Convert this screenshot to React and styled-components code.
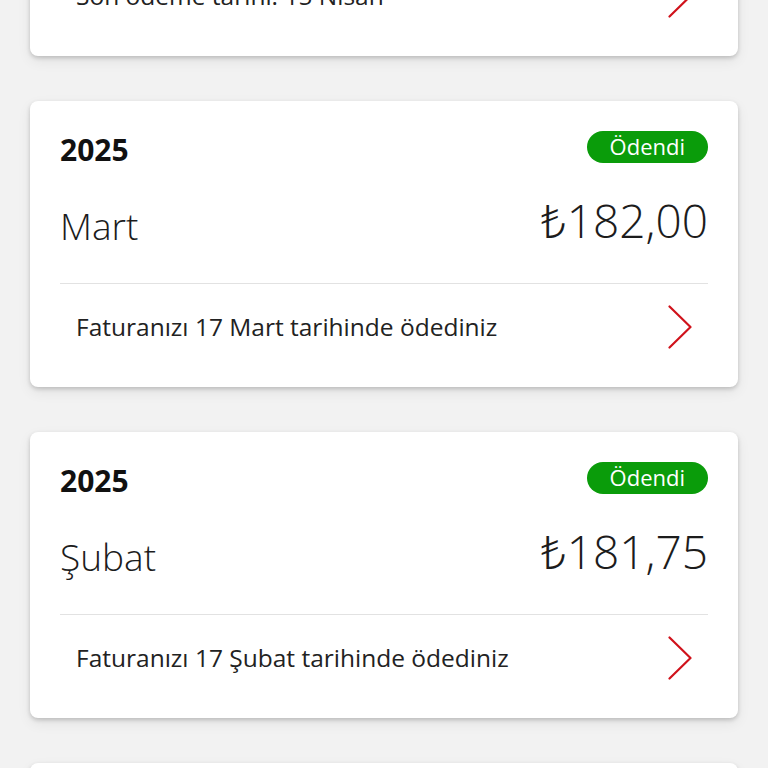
import React from 'react';
import styled, { createGlobalStyle } from 'styled-components';

const GlobalStyle = createGlobalStyle`
  html, body {
    margin: 0;
    padding: 0;
    background: #f2f2f2;
    font-family: "Open Sans", "Noto Sans", "DejaVu Sans", sans-serif;
    overflow: hidden;
  }
`;

const bills = [
  { year: 2025, month: 'Nisan', amount: '₺183,50', paid: false, note: 'Son ödeme tarihi: 15 Nisan' },
  { year: 2025, month: 'Mart', amount: '₺182,00', paid: true, note: 'Faturanızı 17 Mart tarihinde ödediniz' },
  { year: 2025, month: 'Şubat', amount: '₺181,75', paid: true, note: 'Faturanızı 17 Şubat tarihinde ödediniz' },
  { year: 2025, month: 'Ocak', amount: '₺179,90', paid: true, note: 'Faturanızı 17 Ocak tarihinde ödediniz' },
];

const Chevron = () => (
  <svg width="24" height="44" viewBox="0 0 24 44" fill="none">
    <polyline points="1.5,1.5 22.5,22 1.5,42.5" stroke="#d0121b" strokeWidth="2.2" strokeLinecap="round" strokeLinejoin="round" />
  </svg>
);

const BillCard = ({ bill }) => (
  <Card>
    <Top>
      <HeadRow>
        <Year>{bill.year}</Year>
        <Badge $paid={bill.paid}>{bill.paid ? 'Ödendi' : 'Ödenmedi'}</Badge>
      </HeadRow>
      <AmountRow>
        <Month>{bill.month}</Month>
        <Amount>{bill.amount}</Amount>
      </AmountRow>
    </Top>
    <Footer>
      <Note>{bill.note}</Note>
      <Chevron />
    </Footer>
  </Card>
);

export default function App() {
  return (
    <>
      <GlobalStyle />
      <List>
        {bills.map((bill, i) => <BillCard key={i} bill={bill} />)}
      </List>
    </>
  );
}

const List = styled.div`
  display: flex;
  flex-direction: column;
  gap: 45px;
  padding: 0 30px;
  margin-top: -230px;
`;

const Card = styled.div`
  background: #fff;
  border-radius: 8px;
  box-shadow: 0 2px 4px rgba(0, 0, 0, 0.18), 0 5px 14px rgba(0, 0, 0, 0.07);
`;

const Top = styled.div`
  margin: 0 30px;
  padding: 30px 0 27px;
  border-bottom: 1px solid #e2e2e2;
`;

const HeadRow = styled.div`
  display: flex;
  align-items: center;
  justify-content: space-between;
  height: 32px;
`;

const Year = styled.div`
  padding-top: 5px;
  font-size: 30px;
  font-weight: 700;
  line-height: 32px;
  color: #111;
`;

const Badge = styled.div`
  height: 32px;
  padding: 0 23px;
  border-radius: 16px;
  background: #0a9c0a;
  background: ${p => (p.$paid ? '#0a9c0a' : '#e60000')};
  color: #fff;
  font-size: 22px;
  line-height: 31px;
`;

const AmountRow = styled.div`
  display: flex;
  align-items: flex-start;
  justify-content: space-between;
  margin-top: 33px;
  height: 60px;
`;

const Month = styled.div`
  font-size: 37px;
  font-weight: 300;
  line-height: 60px;
  color: #1c1c1c;
`;

const Amount = styled.div`
  font-size: 46px;
  font-weight: 300;
  line-height: 48px;
  color: #1c1c1c;
`;

const Footer = styled.div`
  display: flex;
  align-items: center;
  justify-content: space-between;
  padding: 21px 46px 38px;
`;

const Note = styled.div`
  font-size: 24.5px;
  line-height: 44px;
  color: #222;
`;
